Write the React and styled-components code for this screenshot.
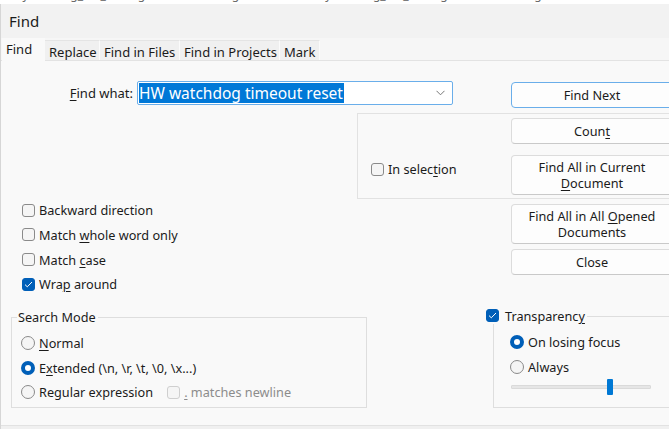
import React from 'react';
import styled, { createGlobalStyle } from 'styled-components';

const GlobalStyle = createGlobalStyle`
  html, body { margin: 0; padding: 0; background: #f0f0f0; }
  u { text-underline-offset: 2px; text-decoration-thickness: 1px; }
`;

const FONT = `"Noto Sans", "Liberation Sans", sans-serif`;

const Screen = styled.div`
  width: 669px;
  height: 429px;
  overflow: hidden;
  display: flex;
  flex-direction: column;
  font-family: ${FONT};
  font-size: 12.7px;
  color: #1b1b1b;
  background: #f0f0f0;
`;

const Backdrop = styled.div`
  height: 4px;
  flex: none;
  overflow: hidden;
  background: #fff;
  white-space: nowrap;
  span {
    display: block;
    margin-top: -12px;
    padding-left: 16px;
    line-height: 14px;
    font-size: 12px;
    color: #6a6a6a;
    word-spacing: 40px;
  }
`;

const Dialog = styled.div`
  flex: 1;
  min-height: 0;
  display: flex;
  flex-direction: column;
  border-left: 1px solid #d6d6d6;
`;

const TitleBar = styled.div`
  height: 34px;
  flex: none;
  display: flex;
  align-items: center;
  padding-left: 8px;
  background: #f2f2f2;
  font-size: 15px;
`;

const TabStrip = styled.div`
  height: 22px;
  flex: none;
  display: flex;
  align-items: flex-end;
  background: #f6f6f6;
  border-bottom: 1px solid #e3e3e3;
`;

const Tab = styled.div`
  box-sizing: border-box;
  width: ${p => p.$w}px;
  height: ${p => (p.$active ? 23 : 20)}px;
  margin-bottom: ${p => (p.$active ? -1 : 0)}px;
  margin-left: ${p => (p.$active ? 1 : 0)}px;
  padding: ${p => (p.$active ? '0 0 1px 4px' : '2px 0 0 4px')};
  display: flex;
  align-items: center;
  font-size: 13px;
  background: ${p => (p.$active ? '#f9f9f9' : '#f0f0f0')};
  border-top: ${p => (p.$active ? 'none' : '1px solid #e4e4e4')};
  border-right: 1px solid ${p => (p.$active ? '#f9f9f9' : '#fbfbfb')};
  position: relative;
  z-index: ${p => (p.$active ? 1 : 0)};
`;

const Panel = styled.div`
  flex: 1;
  min-height: 0;
  display: flex;
  flex-direction: column;
  background: #f9f9f9;
`;

const Footer = styled.div`
  height: 3px;
  flex: none;
  border-top: 1px solid #e2e2e2;
  background: #f0f0f0;
`;

const FindRow = styled.div`
  display: flex;
  align-items: flex-start;
  margin-top: 20px;
`;

const FieldLabel = styled.label`
  width: 136px;
  flex: none;
  box-sizing: border-box;
  padding-right: 4px;
  text-align: right;
  line-height: 24px;
  font-size: 13px;
`;

const Combo = styled.div`
  box-sizing: border-box;
  width: 316px;
  height: 24px;
  flex: none;
  display: flex;
  align-items: center;
  padding-left: 1px;
  background: #fff;
  border: 1px solid #6aaeea;
  border-radius: 2px;
`;

const Selected = styled.span`
  background: #0078d7;
  color: #fff;
  font-size: 15.5px;
  line-height: 20px;
  padding-right: 1px;
`;

const Chevron = styled.svg`
  margin-left: auto;
  margin-right: 7px;
`;

const Button = styled.div`
  box-sizing: border-box;
  width: 162px;
  height: ${p => p.$h || 26}px;
  flex: none;
  display: flex;
  align-items: center;
  justify-content: center;
  text-align: center;
  line-height: 16.5px;
  font-size: 12.7px;
  background: #fdfdfd;
  border: 1px solid ${p => (p.$default ? '#6aaeea' : '#dcdcdc')};
  border-bottom-color: ${p => (p.$default ? '#6aaeea' : '#c9c9c9')};
  border-radius: 4px;
`;

const DefaultSlot = styled.div`
  flex: none;
  margin-left: 58px;
  margin-top: 1px;
`;

const Middle = styled.div`
  display: grid;
  grid-template-columns: 356px 1fr;
  margin-top: 5px;
`;

const Options = styled.div`
  padding-top: 85px;
  padding-left: 21px;
`;

const OptionRow = styled.div`
  height: 24.67px;
  display: flex;
  align-items: center;
  gap: 4px;
  white-space: nowrap;
  color: ${p => (p.$disabled ? '#8c8c8c' : '#1b1b1b')};
`;

const Trailing = styled.span`
  display: flex;
  align-items: center;
  gap: 4px;
  margin-left: 10px;
  color: #8c8c8c;
`;

const RightCol = styled.div`
  display: flex;
  flex-direction: column;
`;

const SelectionBox = styled.div`
  box-sizing: border-box;
  width: 330px;
  height: 86px;
  display: grid;
  grid-template-columns: 153px 162px;
  padding-top: 4px;
  border: 1px solid #e2e2e2;
`;

const SelectionCheck = styled.div`
  padding-left: 13px;
  margin-top: 39px;
`;

const Stack = styled.div`
  display: flex;
  flex-direction: column;
  gap: ${p => p.$gap}px;
  margin-left: ${p => p.$ml || 0}px;
  margin-top: ${p => p.$mt || 0}px;
`;

const BottomRow = styled.div`
  display: flex;
  align-items: flex-start;
`;

const GroupBox = styled.div`
  box-sizing: border-box;
  flex: none;
  display: flex;
  flex-direction: column;
  margin: ${p => p.$mt}px 0 0 ${p => p.$ml}px;
  width: ${p => p.$w}px;
  height: ${p => p.$h}px;
  padding-left: ${p => p.$pl}px;
  border: 1px solid #dedede;
`;

const Caption = styled.div`
  align-self: flex-start;
  margin: -9px 0 6px ${p => p.$ml}px;
  padding: 0 2px 0 1px;
  line-height: 16px;
  background: #f9f9f9;
  display: flex;
  align-items: center;
  gap: 6px;
`;

const Box = styled.span`
  box-sizing: border-box;
  width: 13px;
  height: 13px;
  flex: none;
  display: inline-flex;
  align-items: center;
  justify-content: center;
  border-radius: 3px;
  border: 1px solid ${p => (p.$checked ? '#005fb8' : p.$disabled ? '#cfcfcf' : '#8a8a8a')};
  background: ${p => (p.$checked ? '#005fb8' : '#f5f5f5')};
`;

const Radio = styled.span`
  box-sizing: border-box;
  width: 14px;
  height: 14px;
  flex: none;
  border-radius: 50%;
  border: ${p => (p.$checked ? '4px solid #005fb8' : '1px solid #8a8a8a')};
  background: ${p => (p.$checked ? '#fff' : '#f5f5f5')};
`;

const Slider = styled.div`
  position: relative;
  width: 140px;
  height: 16px;
  margin-left: 1px;
  display: flex;
  align-items: center;
`;

const Track = styled.div`
  width: 100%;
  height: 4px;
  box-sizing: border-box;
  background: #e6e6e6;
  border: 1px solid #dadada;
  border-radius: 1px;
`;

const Thumb = styled.div`
  position: absolute;
  left: ${p => p.$at}px;
  top: 0;
  width: 6px;
  height: 16px;
  border-radius: 1px;
  background: #0078d4;
`;

const Check = ({ checked, disabled }) => (
  <Box $checked={checked} $disabled={disabled}>
    {checked && (
      <svg width="9" height="7" viewBox="0 0 9 7">
        <path d="M1 3.6 L3.3 5.8 L8 1" fill="none" stroke="#fff" strokeWidth="1" />
      </svg>
    )}
  </Box>
);

const CheckOption = ({ checked, disabled, children }) => (
  <OptionRow $disabled={disabled}>
    <Check checked={checked} disabled={disabled} />
    <span>{children}</span>
  </OptionRow>
);

const RadioOption = ({ checked, children }) => (
  <OptionRow>
    <Radio $checked={checked} />
    <span>{children}</span>
  </OptionRow>
);

const tabs = [
  { label: 'Find', w: 43, active: true },
  { label: 'Replace', w: 55 },
  { label: 'Find in Files', w: 80 },
  { label: 'Find in Projects', w: 100 },
  { label: 'Mark', w: 40 },
];

export default function App() {
  return (
    <Screen>
      <GlobalStyle />
      <Backdrop>
        <span>SystemLog_Rst_Manager Management SystemLog_Rst_Manager Management</span>
      </Backdrop>
      <Dialog>
        <TitleBar>Find</TitleBar>
        <TabStrip>
          {tabs.map(t => (
            <Tab key={t.label} $w={t.w} $active={t.active}>{t.label}</Tab>
          ))}
        </TabStrip>
        <Panel>
          <FindRow>
            <FieldLabel><u>F</u>ind what:</FieldLabel>
            <Combo>
              <Selected>HW watchdog timeout reset</Selected>
              <Chevron width="9" height="6" viewBox="0 0 9 6">
                <path d="M0.5 0.8 L4.5 4.8 L8.5 0.8" fill="none" stroke="#777" strokeWidth="1" />
              </Chevron>
            </Combo>
            <DefaultSlot>
              <Button $default><span>Find Next</span></Button>
            </DefaultSlot>
          </FindRow>

          <Middle>
            <Options>
              <CheckOption>Backward direction</CheckOption>
              <CheckOption>Match <u>w</u>hole word only</CheckOption>
              <CheckOption>Match <u>c</u>ase</CheckOption>
              <CheckOption checked>Wra<u>p</u> around</CheckOption>
            </Options>
            <RightCol>
              <SelectionBox>
                <SelectionCheck>
                  <CheckOption>In selec<u>t</u>ion</CheckOption>
                </SelectionCheck>
                <Stack $gap={11}>
                  <Button><span>Coun<u>t</u></span></Button>
                  <Button $h={40}><span>Find All in Current<br /><u>D</u>ocument</span></Button>
                </Stack>
              </SelectionBox>
              <Stack $gap={5} $ml={154} $mt={5}>
                <Button $h={40}><span>Find All in All <u>O</u>pened<br />Documents</span></Button>
                <Button><span>Close</span></Button>
              </Stack>
            </RightCol>
          </Middle>

          <BottomRow>
            <GroupBox $ml={10} $mt={20} $w={356} $h={91} $pl={9}>
              <Caption $ml={-4}>Search Mode</Caption>
              <RadioOption><u>N</u>ormal</RadioOption>
              <RadioOption checked>E<u>x</u>tended (\n, \r, \t, \0, \x...)</RadioOption>
              <OptionRow>
                <Radio />
                <span>Regular expression</span>
                <Trailing>
                  <Check disabled />
                  <span><u>.</u> matches newline</span>
                </Trailing>
              </OptionRow>
            </GroupBox>
            <GroupBox $ml={126} $mt={19} $w={190} $h={92} $pl={16}>
              <Caption $ml={-25}>
                <Check checked />
                <span>Transparenc<u>y</u></span>
              </Caption>
              <RadioOption checked>On losing focus</RadioOption>
              <RadioOption>Always</RadioOption>
              <Slider>
                <Track />
                <Thumb $at={96} />
              </Slider>
            </GroupBox>
          </BottomRow>
        </Panel>
        <Footer />
      </Dialog>
    </Screen>
  );
}
